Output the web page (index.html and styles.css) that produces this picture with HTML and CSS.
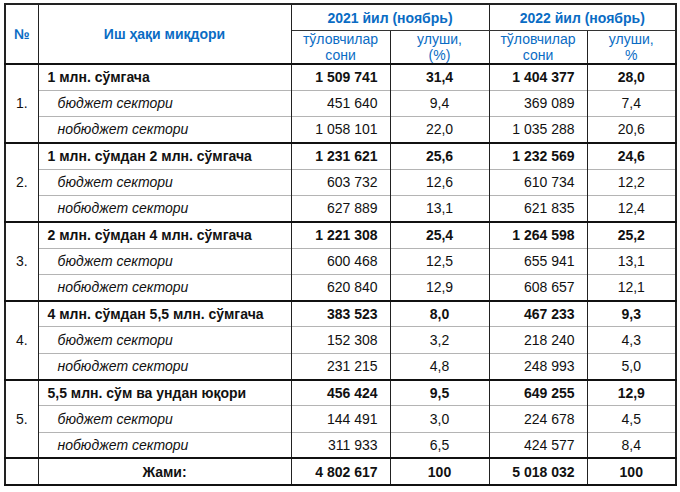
FILE: index.html
```html
<!DOCTYPE html>
<html lang="uz">
<head>
<meta charset="utf-8">
<title>Иш ҳақи миқдори</title>
<link rel="stylesheet" href="styles.css">
</head>
<body>
<table class="wage">
  <colgroup>
    <col class="c-no"><col class="c-desc"><col class="c-cnt"><col class="c-shr"><col class="c-cnt2"><col class="c-shr2">
  </colgroup>
  <thead>
    <tr class="h1">
      <th rowspan="2" class="hd">№</th>
      <th rowspan="2" class="hd">Иш ҳақи миқдори</th>
      <th colspan="2" class="hd yr">2021 йил (ноябрь)</th>
      <th colspan="2" class="hd yr">2022 йил (ноябрь)</th>
    </tr>
    <tr class="h2">
      <th class="sub">тўловчилар<br>сони</th>
      <th class="sub">улуши,<br>(%)</th>
      <th class="sub">тўловчилар<br>сони</th>
      <th class="sub">улуши,<br>%</th>
    </tr>
  </thead>
  <tbody class="grp">
    <tr class="main"><td rowspan="3" class="no">1.</td><td class="name">1 млн. сўмгача</td><td class="num">1 509 741</td><td class="pct">31,4</td><td class="num">1 404 377</td><td class="pct">28,0</td></tr>
    <tr class="sec"><td class="name">бюджет сектори</td><td class="num">451 640</td><td class="pct">9,4</td><td class="num">369 089</td><td class="pct">7,4</td></tr>
    <tr class="sec"><td class="name">нобюджет сектори</td><td class="num">1 058 101</td><td class="pct">22,0</td><td class="num">1 035 288</td><td class="pct">20,6</td></tr>
  </tbody>
  <tbody class="grp">
    <tr class="main"><td rowspan="3" class="no">2.</td><td class="name">1 млн. сўмдан 2 млн. сўмгача</td><td class="num">1 231 621</td><td class="pct">25,6</td><td class="num">1 232 569</td><td class="pct">24,6</td></tr>
    <tr class="sec"><td class="name">бюджет сектори</td><td class="num">603 732</td><td class="pct">12,6</td><td class="num">610 734</td><td class="pct">12,2</td></tr>
    <tr class="sec"><td class="name">нобюджет сектори</td><td class="num">627 889</td><td class="pct">13,1</td><td class="num">621 835</td><td class="pct">12,4</td></tr>
  </tbody>
  <tbody class="grp">
    <tr class="main"><td rowspan="3" class="no">3.</td><td class="name">2 млн. сўмдан 4 млн. сўмгача</td><td class="num">1 221 308</td><td class="pct">25,4</td><td class="num">1 264 598</td><td class="pct">25,2</td></tr>
    <tr class="sec"><td class="name">бюджет сектори</td><td class="num">600 468</td><td class="pct">12,5</td><td class="num">655 941</td><td class="pct">13,1</td></tr>
    <tr class="sec"><td class="name">нобюджет сектори</td><td class="num">620 840</td><td class="pct">12,9</td><td class="num">608 657</td><td class="pct">12,1</td></tr>
  </tbody>
  <tbody class="grp">
    <tr class="main"><td rowspan="3" class="no">4.</td><td class="name">4 млн. сўмдан 5,5 млн. сўмгача</td><td class="num">383 523</td><td class="pct">8,0</td><td class="num">467 233</td><td class="pct">9,3</td></tr>
    <tr class="sec"><td class="name">бюджет сектори</td><td class="num">152 308</td><td class="pct">3,2</td><td class="num">218 240</td><td class="pct">4,3</td></tr>
    <tr class="sec"><td class="name">нобюджет сектори</td><td class="num">231 215</td><td class="pct">4,8</td><td class="num">248 993</td><td class="pct">5,0</td></tr>
  </tbody>
  <tbody class="grp">
    <tr class="main"><td rowspan="3" class="no">5.</td><td class="name">5,5 млн. сўм ва ундан юқори</td><td class="num">456 424</td><td class="pct">9,5</td><td class="num">649 255</td><td class="pct">12,9</td></tr>
    <tr class="sec"><td class="name">бюджет сектори</td><td class="num">144 491</td><td class="pct">3,0</td><td class="num">224 678</td><td class="pct">4,5</td></tr>
    <tr class="sec"><td class="name">нобюджет сектори</td><td class="num">311 933</td><td class="pct">6,5</td><td class="num">424 577</td><td class="pct">8,4</td></tr>
  </tbody>
  <tbody class="grp total">
    <tr class="main"><td class="no"></td><td class="name ctr">Жами:</td><td class="num">4 802 617</td><td class="pct">100</td><td class="num">5 018 032</td><td class="pct">100</td></tr>
  </tbody>
</table>
</body>
</html>
```
FILE: styles.css
```css
html, body {
  margin: 0;
  background: #ffffff;
}
body {
  padding: 3px 0 0 4px;
  font-family: "Liberation Sans", Arial, sans-serif;
  font-size: 14px;
  color: #111;
}
.wage {
  border-collapse: collapse;
  table-layout: fixed;
  width: 671px;
  border: 2px solid #222;
}
.c-no { width: 33px; }
.c-desc { width: 253px; }
.c-cnt { width: 99px; }
.c-shr { width: 99px; }
.c-cnt2 { width: 98px; }
.c-shr2 { width: 89px; }

th, td {
  border-left: 1px solid #222;
  border-right: 1px solid #222;
  padding: 0;
  line-height: 16px;
}
th {
  color: #0a6cc4;
  font-weight: bold;
  text-align: center;
  vertical-align: middle;
}
.h1 th { height: 25px; border-bottom: 1px solid #333; }
.h2 th { height: 32px; }
thead { border-bottom: 2px solid #111; }
.sub {
  font-weight: normal;
}
.grp { border-bottom: 2px solid #111; }
.grp tr { height: 26.3px; }
.grp tr + tr td { border-top: 1px solid #b4b4b4; }
.grp tr + tr td.no { border-top: none; }
.name { padding-left: 9px; }
.sec .name { padding-left: 19px; font-style: italic; }
.main td { font-weight: bold; }
.main td.no {
  font-weight: normal;
  text-align: center;
  vertical-align: middle;
}
.num { text-align: right; padding-right: 12px; }
.pct { text-align: center; }
.ctr { text-align: center; padding-left: 0; }
```
